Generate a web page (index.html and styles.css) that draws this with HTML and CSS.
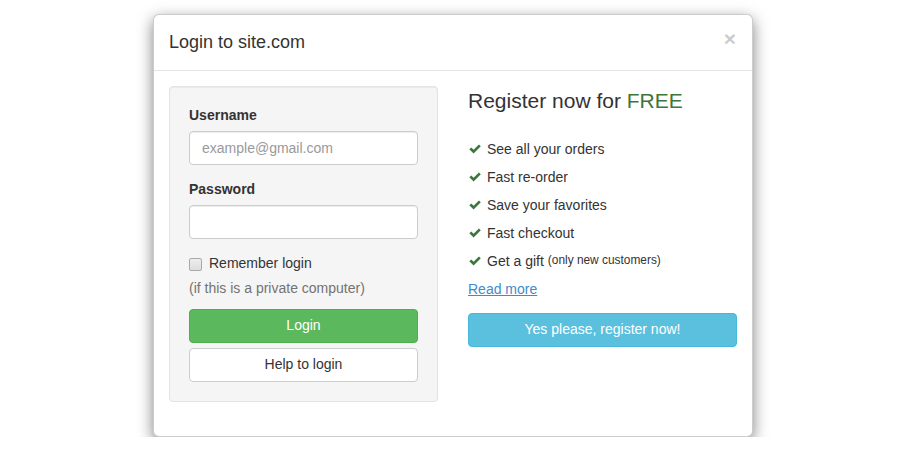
FILE: index.html
```html
<!DOCTYPE html>
<html>
<head>
<meta charset="utf-8">
<title>Login</title>
<link rel="stylesheet" href="styles.css">
</head>
<body>
<div class="modal">
  <div class="modal-header">
    <button class="close" type="button">&times;</button>
    <h4 class="modal-title">Login to site.com</h4>
  </div>
  <div class="modal-body">
    <div class="row">
      <div class="col">
        <div class="well">
          <form>
            <div class="form-group">
              <label class="control-label">Username</label>
              <input class="form-control" type="text" placeholder="example@gmail.com">
            </div>
            <div class="form-group">
              <label class="control-label">Password</label>
              <input class="form-control" type="password">
            </div>
            <div class="checkbox">
              <label><input type="checkbox"> Remember login</label>
              <p class="help-block">(if this is a private computer)</p>
            </div>
            <button type="button" class="btn btn-success">Login</button>
            <button type="button" class="btn btn-default">Help to login</button>
          </form>
        </div>
      </div>
      <div class="col">
        <p class="lead">Register now for <span class="text-success">FREE</span></p>
        <ul class="list">
          <li><svg class="ok" viewBox="0 0 12 10"><path d="M0.3 5.3 L2.3 3.4 L4.6 5.7 L9.9 0.4 L11.8 2.3 L4.6 9.4 Z" fill="#3c763d"/></svg>See all your orders</li>
          <li><svg class="ok" viewBox="0 0 12 10"><path d="M0.3 5.3 L2.3 3.4 L4.6 5.7 L9.9 0.4 L11.8 2.3 L4.6 9.4 Z" fill="#3c763d"/></svg>Fast re-order</li>
          <li><svg class="ok" viewBox="0 0 12 10"><path d="M0.3 5.3 L2.3 3.4 L4.6 5.7 L9.9 0.4 L11.8 2.3 L4.6 9.4 Z" fill="#3c763d"/></svg>Save your favorites</li>
          <li><svg class="ok" viewBox="0 0 12 10"><path d="M0.3 5.3 L2.3 3.4 L4.6 5.7 L9.9 0.4 L11.8 2.3 L4.6 9.4 Z" fill="#3c763d"/></svg>Fast checkout</li>
          <li><svg class="ok" viewBox="0 0 12 10"><path d="M0.3 5.3 L2.3 3.4 L4.6 5.7 L9.9 0.4 L11.8 2.3 L4.6 9.4 Z" fill="#3c763d"/></svg>Get a gift <small>(only new customers)</small></li>
          <li><a href="#" class="link">Read more</a></li>
        </ul>
        <button type="button" class="btn btn-info">Yes please, register now!</button>
      </div>
    </div>
  </div>
</div>
</body>
</html>
```

FILE: styles.css
```css
* { box-sizing: border-box; }
html, body { margin: 0; padding: 0; background: #fff; }
body {
  font-family: "Liberation Sans", Arial, Helvetica, sans-serif;
  font-size: 14px;
  line-height: 1.42857;
  color: #333;
  padding-top: 14px;
}
.modal {
  width: 600px;
  margin: 0 0 0 153px;
  background: #fff;
  border: 1px solid rgba(0,0,0,.2);
  border-radius: 6px;
  box-shadow: 0 5px 15px rgba(0,0,0,.5);
}
.modal-header {
  padding: 15px;
  border-bottom: 1px solid #e5e5e5;
  min-height: 16px;
}
.modal-title {
  margin: 0;
  font-size: 18px;
  font-weight: 500;
  line-height: 25px;
}
.close {
  float: right;
  margin-top: -2px;
  margin-right: 1px;
  padding: 0;
  border: 0;
  background: transparent;
  font-family: inherit;
  font-size: 21px;
  font-weight: bold;
  line-height: 1;
  color: #000;
  opacity: .2;
  text-shadow: 0 1px 0 #fff;
  cursor: pointer;
}
.modal-body { padding: 15px; }
.row { display: flex; gap: 30px; }
.col { flex: 1 1 0; min-width: 0; }
.well {
  min-height: 20px;
  padding: 19px;
  margin-bottom: 19px;
  background: #f5f5f5;
  border: 1px solid #e3e3e3;
  border-radius: 4px;
  box-shadow: inset 0 1px 1px rgba(0,0,0,.05);
}
form { margin: 0; }
.form-group { margin-bottom: 15px; }
.control-label {
  display: inline-block;
  max-width: 100%;
  margin-bottom: 5px;
  font-weight: bold;
}
.form-control {
  display: block;
  width: 100%;
  height: 34px;
  padding: 6px 12px;
  font-family: inherit;
  font-size: 14px;
  line-height: 1.42857;
  color: #555;
  background: #fff;
  border: 1px solid #ccc;
  border-radius: 4px;
  box-shadow: inset 0 1px 1px rgba(0,0,0,.075);
  margin: 0;
}
.form-control::placeholder { color: #999; opacity: 1; }
.checkbox { margin: 0 0 10px; }
.checkbox label {
  display: block;
  min-height: 20px;
  padding-left: 20px;
  font-weight: normal;
}
.checkbox input {
  -webkit-appearance: none;
  appearance: none;
  float: left;
  margin: 4px 0 0 -20px;
  width: 13px;
  height: 13px;
  border: 1px solid #a9a9a9;
  border-radius: 2px;
  background: linear-gradient(#ededed, #dedede);
}
.help-block {
  display: block;
  margin: 5px 0 10px;
  color: #737373;
}
.btn {
  display: block;
  width: 100%;
  height: 34px;
  padding: 6px 12px;
  font-family: inherit;
  font-size: 14px;
  line-height: 1.42857;
  text-align: center;
  border: 1px solid transparent;
  border-radius: 4px;
  cursor: pointer;
  margin: 0;
}
.btn + .btn { margin-top: 5px; }
.btn-success { color: #fff; background: #5cb85c; border-color: #4cae4c; }
.btn-default { color: #333; background: #fff; border-color: #ccc; }
.btn-info { color: #fff; background: #5bc0de; border-color: #46b8da; }
.lead {
  margin: 0 0 20px;
  font-size: 21px;
  font-weight: 300;
  line-height: 1.4;
}
.text-success { color: #3c763d; }
.list {
  list-style: none;
  margin: 0 0 10px;
  padding: 0;
  line-height: 2;
}
.list li { display: flex; align-items: center; }
.ok { width: 12px; height: 10px; margin: 0 6px 0 1px; flex: none; }
small { font-size: 85%; margin-left: 4px; }
.link { color: #428bca; text-decoration: underline; }
```
